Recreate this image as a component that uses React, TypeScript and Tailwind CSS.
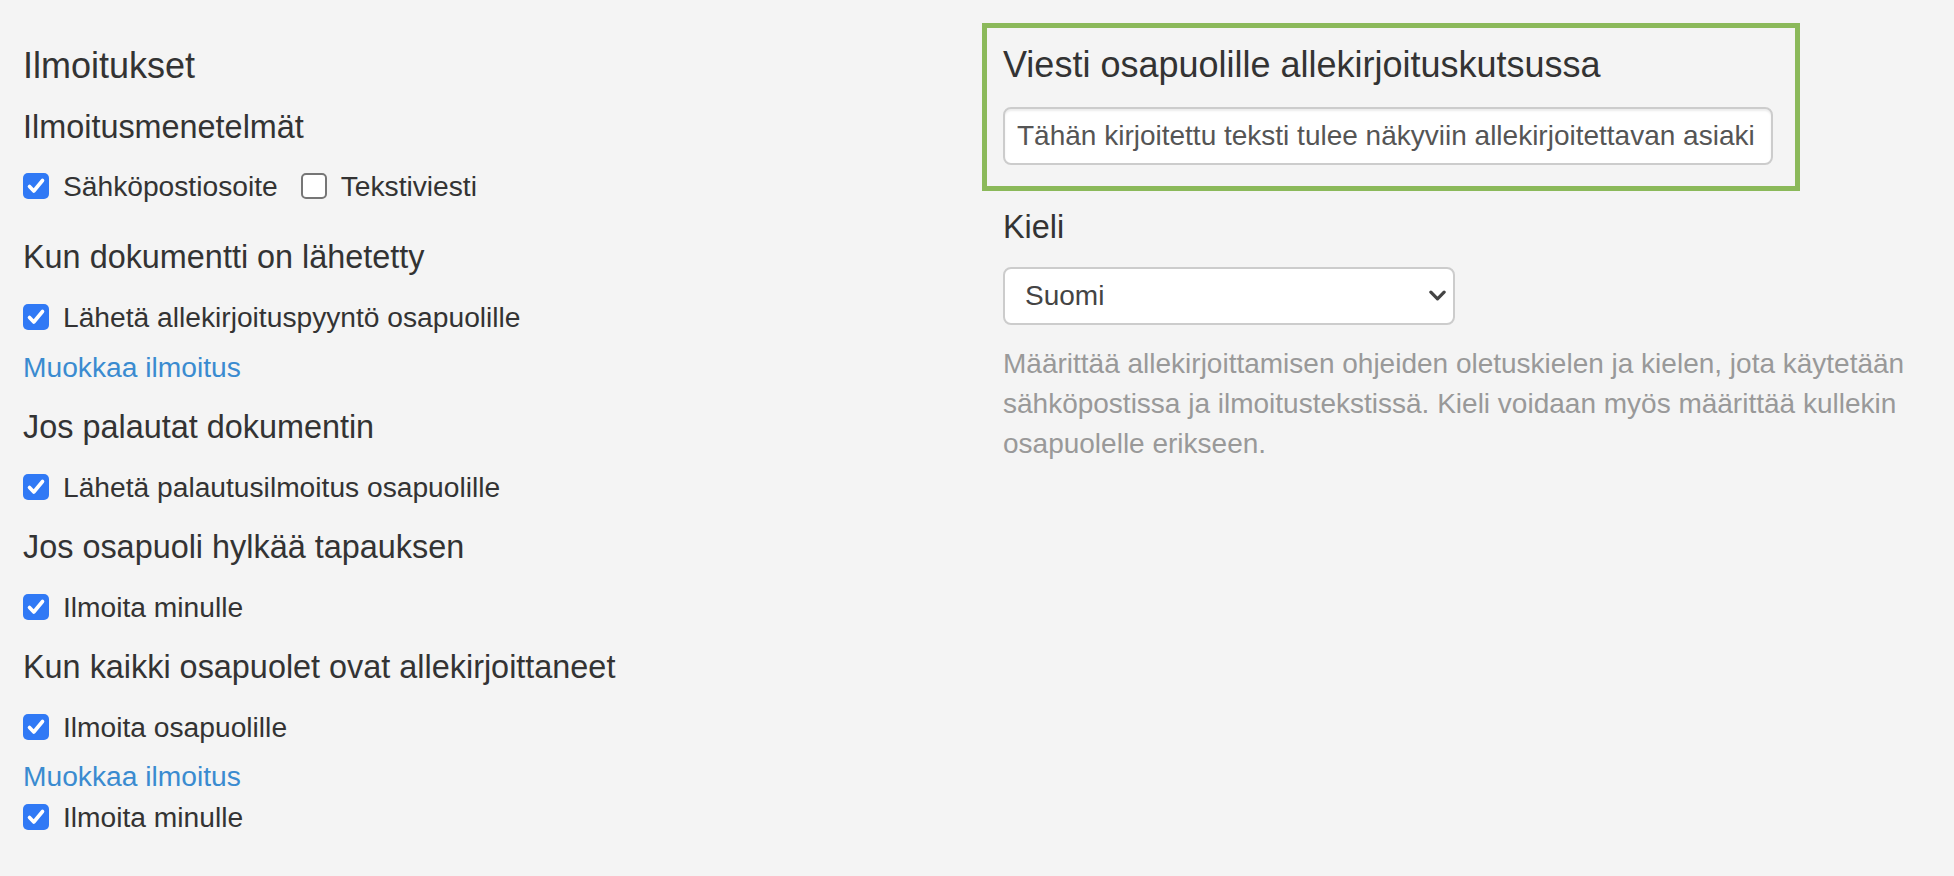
import { useState } from 'react';

const Check = ({ checked, onChange }: { checked: boolean; onChange: () => void }) => (
  <button
    type="button"
    onClick={onChange}
    className={
      checked
        ? 'w-[26px] h-[26px] shrink-0 rounded-[5px] bg-[#3079f5] flex items-center justify-center'
        : 'w-[26px] h-[26px] shrink-0 rounded-[5px] bg-white border-2 border-[#767676]'
    }
  >
    {checked && (
      <svg viewBox="0 0 26 26" className="w-[26px] h-[26px]">
        <path d="M6.5 13.5 L10.8 18 L19.5 7.5" fill="none" stroke="white" strokeWidth="3.6" strokeLinecap="round" strokeLinejoin="round" />
      </svg>
    )}
  </button>
);

const CheckRow = ({ label, initial = true, className = '' }: { label: string; initial?: boolean; className?: string }) => {
  const [on, setOn] = useState(initial);
  return (
    <label className={`flex items-center gap-[14px] h-[40px] text-[28.2px] leading-[40px] text-[#333] ${className}`}>
      <Check checked={on} onChange={() => setOn(!on)} />
      <span>{label}</span>
    </label>
  );
};

const App = () => {
  return (
    <div className="min-h-screen bg-[#f4f4f4] font-['Liberation_Sans',Arial,sans-serif] text-[#333] flex">
      {/* left column */}
      <div className="w-[1003px] shrink-0 pl-[23px] pt-[46px] flex flex-col items-start">
        <h3 className="text-[36px] leading-[40px]">Ilmoitukset</h3>
        <h4 className="mt-[21px] text-[32.4px] leading-[40px]">Ilmoitusmenetelmät</h4>
        <div className="mt-[19px] flex gap-[23px]">
          <CheckRow label="Sähköpostiosoite" />
          <CheckRow label="Tekstiviesti" initial={false} />
        </div>

        <h4 className="mt-[31px] text-[32.4px] leading-[40px]">Kun dokumentti on lähetetty</h4>
        <CheckRow className="mt-[20px]" label="Lähetä allekirjoituspyyntö osapuolille" />
        <a href="#" className="mt-[10px] text-[28.2px] leading-[40px] text-[#3a8bd0]">Muokkaa ilmoitus</a>

        <h4 className="mt-[20px] text-[32.4px] leading-[40px]">Jos palautat dokumentin</h4>
        <CheckRow className="mt-[20px]" label="Lähetä palautusilmoitus osapuolille" />

        <h4 className="mt-[20px] text-[32.4px] leading-[40px]">Jos osapuoli hylkää tapauksen</h4>
        <CheckRow className="mt-[20px]" label="Ilmoita minulle" />

        <h4 className="mt-[20px] text-[32.4px] leading-[40px]">Kun kaikki osapuolet ovat allekirjoittaneet</h4>
        <CheckRow className="mt-[20px]" label="Ilmoita osapuolille" />
        <a href="#" className="mt-[9px] text-[28.2px] leading-[40px] text-[#3a8bd0]">Muokkaa ilmoitus</a>
        <CheckRow className="mt-[1px]" label="Ilmoita minulle" />
      </div>

      {/* right column */}
      <div className="flex-1 pt-[23px] pr-[24px]">
        <div className="ml-[-21px] w-[818px] border-[5px] border-[#8bb95a] pl-[16px] pr-[20px] pt-[17px] pb-[21px]">
          <h3 className="text-[36px] leading-[40px]">Viesti osapuolille allekirjoituskutsussa</h3>
          <input
            type="text"
            defaultValue="Tähän kirjoitettu teksti tulee näkyviin allekirjoitettavan asiakirjan saatteessa."
            className="mt-[22px] block w-[770px] h-[58px] pl-[12px] pr-[16px] rounded-[8px] border-2 border-[#cccccc] bg-white text-[28px] text-[#555] shadow-[inset_0_2px_2px_rgba(0,0,0,0.075)] outline-none"
          />
        </div>

        <h4 className="mt-[16px] text-[32.4px] leading-[40px]">Kieli</h4>
        <div className="relative mt-[20px] w-[452px] h-[58px]">
          <select
            defaultValue="fi"
            className="appearance-none w-full h-full pl-[20px] pr-[40px] rounded-[8px] border-2 border-[#cccccc] bg-white text-[28px] text-[#444] outline-none"
          >
            <option value="fi">Suomi</option>
            <option value="sv">Svenska</option>
            <option value="en">English</option>
          </select>
          <svg viewBox="0 0 18 12" className="absolute right-[9px] top-[23px] w-[17px] h-[12px] pointer-events-none">
            <path d="M2 2 L9 9 L16 2" fill="none" stroke="#444" strokeWidth="3.4" strokeLinecap="round" strokeLinejoin="round" />
          </svg>
        </div>

        <p className="mt-[19px] text-[28px] leading-[40px] text-[#999]">
          Määrittää allekirjoittamisen ohjeiden oletuskielen ja kielen, jota käytetään sähköpostissa ja ilmoitustekstissä. Kieli voidaan myös määrittää kullekin osapuolelle erikseen.
        </p>
      </div>
    </div>
  );
};

export default App;
